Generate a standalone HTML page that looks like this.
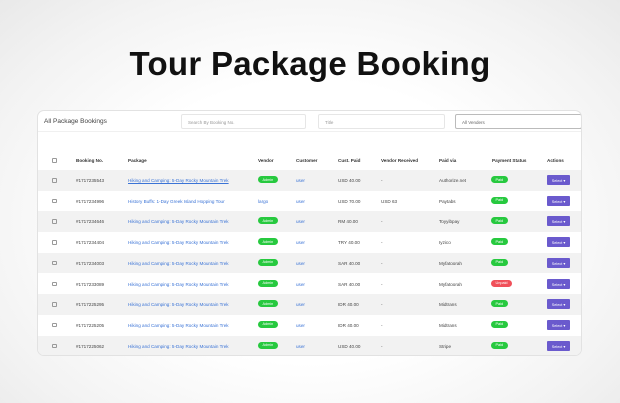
<!DOCTYPE html>
<html><head><meta charset="utf-8"><style>
*{margin:0;padding:0;box-sizing:border-box}
body{width:620px;height:403px;overflow:hidden;font-family:"Liberation Sans",sans-serif;
background:radial-gradient(ellipse at 50% 55%,#ffffff 45%,#f3f3f3 78%,#e9e9e9 100%);position:relative}
h1{position:absolute;top:45px;left:0;width:620px;text-align:center;font-size:33px;font-weight:bold;color:#111;letter-spacing:0.3px}
.panel{position:absolute;left:37px;top:110px;width:545px;height:246px;background:#fff;border:1px solid #e2e2e2;border-radius:7px;overflow:hidden}
.ttl{position:absolute;left:6px;top:7px;font-size:6.5px;color:#444}
.in{position:absolute;top:3px;height:15px;border:1px solid #e6e6e6;border-radius:2px;font-size:4.5px;color:#999;padding:5px 0 0 6px}
.hr{position:absolute;left:0;top:20px;width:100%;border-top:1px solid #f0f0f0}
.row{position:absolute;left:0;width:100%;height:20.7px;font-size:4.6px;color:#444}
.row.g{background:#f2f2f2}
.row span{position:absolute;top:8px;white-space:nowrap}
.h span{font-weight:bold;color:#333}
.cb{width:4.5px;height:4.5px;border:0.6px solid #999;border-radius:1px;display:block;top:8px!important}
.lk{color:#3a73d6}
.u{text-decoration:underline}
.badge{background:#27c93f;color:#fff;border-radius:4px;padding:1.5px 4.5px;font-size:3.8px;top:6px!important}
.red{background:#f0505a}
.sel{background:#6a5acd;color:#fff;font-size:3.8px;width:23px;height:10px;text-align:center;padding-top:3px;top:5px!important;border-radius:1px}
</style></head><body>
<h1>Tour Package Booking</h1>
<div class="panel">
<div class="ttl">All Package Bookings</div>
<div class="in" style="left:143px;width:125px">Search By Booking No.</div>
<div class="in" style="left:280px;width:127px">Title</div>
<div class="in" style="left:417px;width:127px;border-color:#bbb;color:#666">All Venders</div>
<div class="hr"></div>
<div class="row h" style="top:39px"><span class="cb" style="left:14px"></span><span style="left:38px">Booking No.</span><span style="left:90px">Package</span><span style="left:220px">Vendor</span><span style="left:258px">Customer</span><span style="left:300px">Cust. Paid</span><span style="left:343px">Vendor Received</span><span style="left:401px">Paid via</span><span style="left:454px">Payment Status</span><span style="left:509px">Actions</span></div>
</div>
<script>
const d=[["#1717235543","Hiking and Camping: 5-Day Rocky Mountain Trek",1,"USD 40.00","-","Authorize.net",1],
["#1717234996","History Buffs: 1-Day Greek Island Hopping Tour",0,"USD 70.00","USD 63","Paytabs",1],
["#1717234646","Hiking and Camping: 5-Day Rocky Mountain Trek",1,"RM 40.00","-","Toyyibpay",1],
["#1717234404","Hiking and Camping: 5-Day Rocky Mountain Trek",1,"TRY 40.00","-","Iyzico",1],
["#1717234003","Hiking and Camping: 5-Day Rocky Mountain Trek",1,"SAR 40.00","-","Myfatoorah",1],
["#1717233089","Hiking and Camping: 5-Day Rocky Mountain Trek",1,"SAR 40.00","-","Myfatoorah",0],
["#1717225295","Hiking and Camping: 5-Day Rocky Mountain Trek",1,"IDR 40.00","-","Midtrans",1],
["#1717225205","Hiking and Camping: 5-Day Rocky Mountain Trek",1,"IDR 40.00","-","Midtrans",1],
["#1717225062","Hiking and Camping: 5-Day Rocky Mountain Trek",1,"USD 40.00","-","Stripe",1]];
const p=document.querySelector('.panel');
d.forEach((r,i)=>{const e=document.createElement('div');e.className='row'+(i%2==0?' g':'');e.style.top=(59+i*20.7)+'px';
e.innerHTML=`<span class="cb" style="left:14px"></span><span style="left:38px">${r[0]}</span><span class="lk ${i==0?'u':''}" style="left:90px">${r[1]}</span>`+
(r[2]?`<span class="badge" style="left:220px">Admin</span>`:`<span class="lk" style="left:220px">largo</span>`)+
`<span class="lk" style="left:258px">user</span><span style="left:300px">${r[3]}</span><span style="left:343px">${r[4]}</span><span style="left:401px">${r[5]}</span>`+
(r[6]?`<span class="badge" style="left:453px">Paid</span>`:`<span class="badge red" style="left:453px">Unpaid</span>`)+
`<span class="sel" style="left:509px">Select ▾</span>`;p.appendChild(e);});
</script>
</body></html>
